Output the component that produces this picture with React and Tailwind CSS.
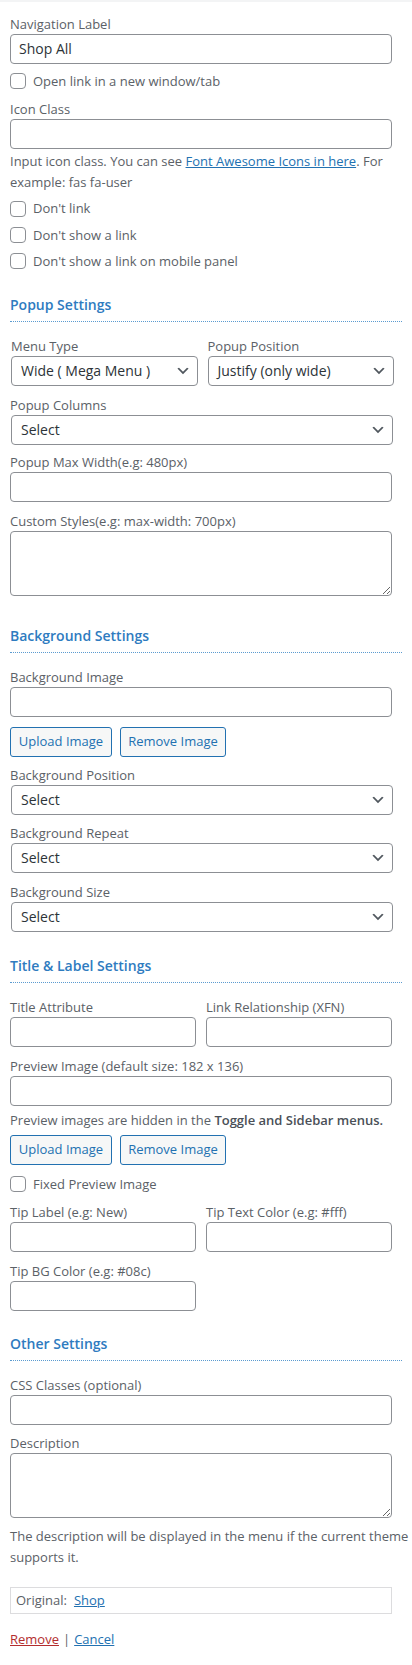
import React from "react";

const Label = ({ children, className = "" }) => (
  <div className={"text-[13px] leading-[19px] text-[#5b6167] whitespace-nowrap " + className}>{children}</div>
);

const TextInput = ({ value = "", className = "w-[382px]" }) => (
  <input
    type="text"
    defaultValue={value}
    readOnly
    className={
      "block h-[30px] rounded-[4px] border border-[#8c8f94] bg-white px-[8px] text-[14px] text-[#2c3338] outline-none " +
      className
    }
  />
);

const Chevron = () => (
  <svg width="16" height="16" viewBox="0 0 20 20" className="shrink-0">
    <path d="M5 6l5 5 5-5 2 1-7 7-7-7 2-1z" fill="#50575e" />
  </svg>
);

const Select = ({ value = "Select", className = "w-[382px]" }) => (
  <div
    className={
      "flex h-[30px] items-center justify-between rounded-[4px] border border-[#8c8f94] bg-white pl-[9px] pr-[6px] text-[14px] text-[#2c3338] " +
      className
    }
  >
    <span className="whitespace-nowrap">{value}</span>
    <Chevron />
  </div>
);

const TextArea = () => (
  <textarea
    readOnly
    className="block h-[65px] w-[382px] rounded-[4px] border border-[#8c8f94] bg-white px-[8px] py-[2px] text-[14px] text-[#2c3338] outline-none"
  />
);

const Check = ({ children, className = "" }) => (
  <div className={"flex h-[20px] items-center gap-[7px] " + className}>
    <span className="block h-[16px] w-[16px] shrink-0 rounded-[4px] border border-[#8c8f94] bg-white" />
    <span className="text-[13px] leading-[19px] text-[#5b6167] whitespace-nowrap">{children}</span>
  </div>
);

const Heading = ({ children, className = "" }) => (
  <div className={"border-b border-dotted border-[#5b9bd0] pb-[6px] " + className}>
    <div className="text-[14px] font-semibold leading-[20px] text-[#2e7bbf]">{children}</div>
  </div>
);

const Buttons = ({ className = "" }) => (
  <div className={"flex gap-[8px] " + className}>
    <div className="flex h-[30px] w-[102px] items-center justify-center rounded-[3px] border border-[#2271b1] bg-[#f6f7f7] text-[13px] text-[#2271b1]">
      Upload Image
    </div>
    <div className="flex h-[30px] w-[106px] items-center justify-center rounded-[3px] border border-[#2271b1] bg-[#f6f7f7] text-[13px] text-[#2271b1]">
      Remove Image
    </div>
  </div>
);

export default function App() {
  return (
    <div className="min-h-[1665px] w-[412px] bg-white font-['Open_Sans','Noto_Sans',sans-serif] text-[13px] text-[#5b6167]">
      <div className="h-[2px] bg-[#f3f4f5]" />
      <div className="px-[10px] pt-[12.5px]">
        <Label>Navigation Label</Label>
        <TextInput value="Shop All" />
        <Check className="mt-[7.5px]">Open link in a new window/tab</Check>
        <Label className="mt-[8.5px]">Icon Class</Label>
        <TextInput />
        <div className="mt-[2px] w-[392px] text-[13px] leading-[21px] text-[#5b6167]">
          <div className="whitespace-nowrap">
            Input icon class. You can see <span className="text-[#2271b1] underline">Font Awesome Icons in here</span>. For
          </div>
          <div>example: fas fa-user</div>
        </div>
        <Check className="mt-[6px]">Don't link</Check>
        <Check className="mt-[6.5px]">Don't show a link</Check>
        <Check className="mt-[6px]">Don't show a link on mobile panel</Check>

        <Heading className="mt-[24px]">Popup Settings</Heading>
        <div className="mt-[14.7px] grid w-[384px] grid-cols-2 gap-x-[10px] pl-[1px]">
          <div>
            <Label>Menu Type</Label>
            <Select value="Wide ( Mega Menu )" className="w-full" />
          </div>
          <div>
            <Label>Popup Position</Label>
            <Select value="Justify (only wide)" className="w-full" />
          </div>
        </div>
        <Label className="mt-[10px]">Popup Columns</Label>
        <div className="pl-[1px]">
          <Select />
        </div>
        <Label className="mt-[8.5px]">Popup Max Width(e.g: 480px)</Label>
        <TextInput />
        <Label className="mt-[10px]">Custom Styles(e.g: max-width: 700px)</Label>
        <TextArea />

        <Heading className="mt-[29.8px]">Background Settings</Heading>
        <Label className="mt-[14.7px]">Background Image</Label>
        <TextInput />
        <Buttons className="mt-[10px]" />
        <Label className="mt-[9px]">Background Position</Label>
        <div className="pl-[1px]">
          <Select />
        </div>
        <Label className="mt-[9.3px]">Background Repeat</Label>
        <div className="pl-[1px]">
          <Select />
        </div>
        <Label className="mt-[9.7px]">Background Size</Label>
        <div className="pl-[1px]">
          <Select />
        </div>

        <Heading className="mt-[24.3px]">Title &amp; Label Settings</Heading>
        <div className="mt-[14.7px] grid w-[382px] grid-cols-2 gap-x-[10px]">
          <div>
            <Label>Title Attribute</Label>
            <TextInput className="w-full" />
          </div>
          <div>
            <Label>Link Relationship (XFN)</Label>
            <TextInput className="w-full" />
          </div>
        </div>
        <Label className="mt-[10px]">Preview Image (default size: 182 x 136)</Label>
        <TextInput />
        <div className="mt-[4.5px] text-[13px] leading-[21px] text-[#5b6167] whitespace-nowrap">
          Preview images are hidden in the <span className="font-semibold text-[#4a5057]">Toggle and Sidebar menus.</span>
        </div>
        <Buttons className="mt-[4px]" />
        <Check className="mt-[9px]">Fixed Preview Image</Check>
        <div className="mt-[8.5px] grid w-[382px] grid-cols-2 gap-x-[10px]">
          <div>
            <Label>Tip Label (e.g: New)</Label>
            <TextInput className="w-full" />
          </div>
          <div>
            <Label>Tip Text Color (e.g: #fff)</Label>
            <TextInput className="w-full" />
          </div>
        </div>
        <div className="mt-[10px] w-[186px]">
          <Label>Tip BG Color (e.g: #08c)</Label>
          <TextInput className="w-full" />
        </div>

        <Heading className="mt-[23.6px]">Other Settings</Heading>
        <Label className="mt-[14.7px]">CSS Classes (optional)</Label>
        <TextInput />
        <Label className="mt-[9px]">Description</Label>
        <TextArea />
        <div className="mt-[8px] w-[392px] text-[13px] leading-[21px] text-[#5b6167]">
          <div className="whitespace-nowrap">The description will be displayed in the menu if the current theme</div>
          <div>supports it.</div>
        </div>

        <div className="mt-[19.3px] flex h-[27px] w-[382px] items-center border border-[#dcdcde] px-[5px] text-[13px] text-[#5b6167]">
          <span>Original:</span>
          <span className="ml-[7px] text-[#2271b1] underline">Shop</span>
        </div>

        <div className="mt-[15.5px] flex items-center text-[13px] leading-[19px]">
          <span className="text-[#b32d2e] underline">Remove</span>
          <span className="px-[4px] text-[#5b6167]">|</span>
          <span className="text-[#2271b1] underline">Cancel</span>
        </div>
      </div>
    </div>
  );
}
